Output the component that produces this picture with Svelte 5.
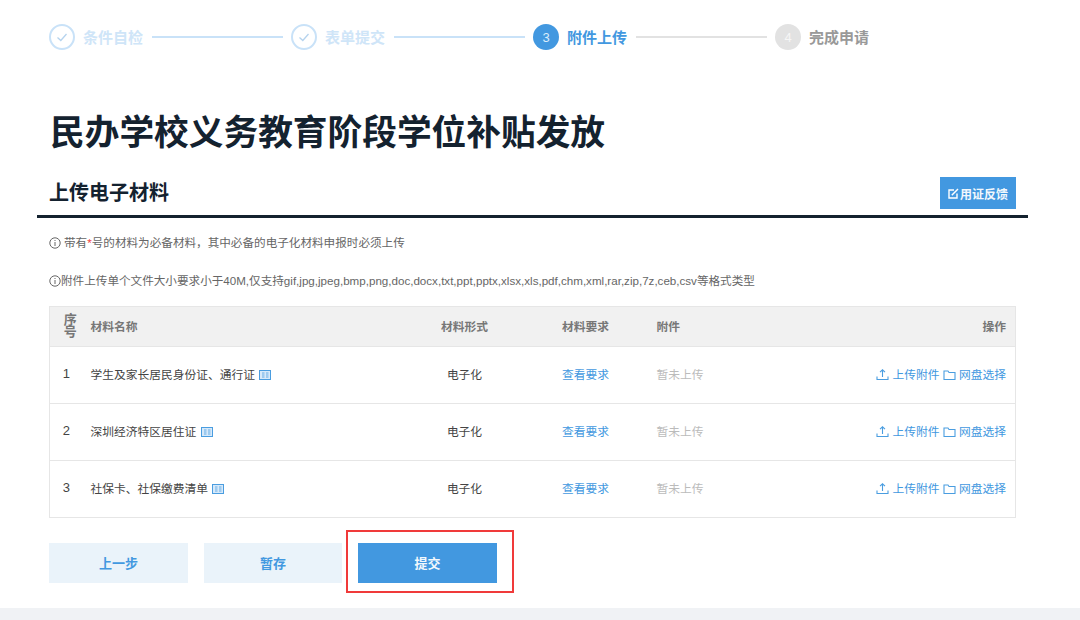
<script>
    const steps = [
        { label: '条件自检', state: 'done' },
        { label: '表单提交', state: 'done' },
        { label: '附件上传', no: 3, state: 'active' },
        { label: '完成申请', no: 4, state: 'todo' }
    ];

    const materials = [
        { no: 1, name: '学生及家长居民身份证、通行证' },
        { no: 2, name: '深圳经济特区居住证' },
        { no: 3, name: '社保卡、社保缴费清单' }
    ];
</script>

<div class="page">
    <div class="steps">
        {#each steps as step, i}
            <div class="step {step.state}">
                <span class="dot">
                    {#if step.state === 'done'}
                        <svg width="14" height="14" viewBox="0 0 14 14" fill="none"><path d="M2.5 7.5 L5.8 10.5 L11.5 4" stroke="currentColor" stroke-width="1.3" /></svg>
                    {:else}
                        {step.no}
                    {/if}
                </span>
                <span class="step-label">{step.label}</span>
            </div>
            {#if i < steps.length - 1}
                <span class="step-line {step.state === 'done' ? 'blue' : ''}"></span>
            {/if}
        {/each}
    </div>

    <h1>民办学校义务教育阶段学位补贴发放</h1>

    <div class="section-head">
        <h2>上传电子材料</h2>
        <button class="feedback">
            <svg width="11" height="11" viewBox="0 0 11 11" fill="none"><path d="M9 5.5 V10 H1 V2 H6" stroke="#fff" stroke-width="1.4" /><path d="M3.8 7.2 L10 1" stroke="#fff" stroke-width="1.5" /></svg>
            用证反馈
        </button>
    </div>

    <div class="notes">
        <p class="note-first">
            <svg class="info" width="12" height="12" viewBox="0 0 12 12" fill="none"><circle cx="6" cy="6" r="5.2" stroke="#666" /><path d="M6 5 V9 M6 3 V4" stroke="#666" /></svg>
            <span class="gap">带有<b class="req">*</b>号的材料为必备材料，其中必备的电子化材料申报时必须上传</span>
        </p>
        <p class="note-second">
            <svg class="info" width="12" height="12" viewBox="0 0 12 12" fill="none"><circle cx="6" cy="6" r="5.2" stroke="#666" /><path d="M6 5 V9 M6 3 V4" stroke="#666" /></svg>
            <span>附件上传单个文件大小要求小于40M,仅支持gif,jpg,jpeg,bmp,png,doc,docx,txt,ppt,pptx,xlsx,xls,pdf,chm,xml,rar,zip,7z,ceb,csv等格式类型</span>
        </p>
    </div>

    <table>
        <colgroup>
            <col class="c-no" />
            <col class="c-name" />
            <col class="c-form" />
            <col class="c-req" />
            <col class="c-file" />
            <col />
        </colgroup>
        <thead>
            <tr>
                <th class="no">序号</th>
                <th class="left">材料名称</th>
                <th>材料形式</th>
                <th class="req-cell">材料要求</th>
                <th class="left">附件</th>
                <th class="right">操作</th>
            </tr>
        </thead>
        <tbody>
            {#each materials as m}
                <tr>
                    <td class="num">{m.no}</td>
                    <td class="left name">
                        {m.name}
                        <svg class="tag" width="12" height="10" viewBox="0 0 12 10"><rect x="0.5" y="0.5" width="11" height="9" fill="#d6e9fa" stroke="#4a9de0" /><path d="M3 3 H5.5 M3 5 H5.5 M3 7 H5.5 M7 3 H9.5 M7 5 H9.5 M7 7 H9.5" stroke="#4a9de0" stroke-width="0.8" /></svg>
                    </td>
                    <td class="form">电子化</td>
                    <td class="req-cell"><span class="link">查看要求</span></td>
                    <td class="left muted">暂未上传</td>
                    <td class="right ops">
                        <span class="link op">
                            <svg width="13" height="13" viewBox="0 0 13 13" fill="none"><path d="M6.5 9 V2 M4 4.2 L6.5 1.8 L9 4.2 M1 8.5 V11.5 H12 V8.5" stroke="#4a9de0" stroke-width="1.1" /></svg>
                            上传附件
                        </span>
                        <span class="link op">
                            <svg width="13" height="12" viewBox="0 0 13 12" fill="none"><path d="M1 2 H5 L6 3.5 H12 V10.5 H1 Z" stroke="#4a9de0" stroke-width="1.1" /></svg>
                            网盘选择
                        </span>
                    </td>
                </tr>
            {/each}
        </tbody>
    </table>

    <div class="actions">
        <button class="btn light">上一步</button>
        <button class="btn light save">暂存</button>
        <div class="submit-wrap">
            <button class="btn primary">提交</button>
            <span class="highlight"></span>
        </div>
    </div>

    <div class="footer"></div>
</div>

<style>
    :global(body) {
        margin: 0;
        background: #fff;
    }

    .page {
        width: 1080px;
        height: 620px;
        overflow: hidden;
        font-family: "Liberation Sans", "Noto Sans CJK SC", sans-serif;
        color: #333;
    }

    .steps {
        display: flex;
        align-items: center;
        gap: 8px;
        height: 26px;
        padding: 24px 0 0 49px;
    }

    .step {
        display: flex;
        align-items: center;
        gap: 8px;
        font-size: 15px;
        font-weight: 700;
    }

    .step-label {
        margin-top: -2px;
    }

    .dot {
        width: 26px;
        height: 26px;
        box-sizing: border-box;
        border-radius: 50%;
        display: flex;
        align-items: center;
        justify-content: center;
        font-size: 13px;
        font-weight: 400;
    }

    .step.done .dot {
        border: 2px solid #c9e2f8;
        color: #b5d3ee;
    }

    .step.done .step-label {
        color: #cfe5f8;
    }

    .step.active .dot {
        background: #4298e0;
        color: #dcedfb;
    }

    .step.active .step-label {
        color: #4298e0;
    }

    .step.todo .dot {
        background: #e2e2e2;
        color: #f6f6f6;
    }

    .step.todo .step-label {
        color: #999;
    }

    .step-line {
        width: 131px;
        height: 2px;
        margin-left: 1px;
        background: #e2e2e2;
    }

    .step-line.blue {
        background: #c9e2f8;
    }

    h1 {
        margin: 0;
        padding: 60px 0 0 50px;
        height: 47px;
        font-size: 34.7px;
        line-height: 47px;
        font-weight: 700;
        color: #14222f;
    }

    .section-head {
        display: flex;
        align-items: center;
        justify-content: space-between;
        box-sizing: border-box;
        width: 991px;
        height: 42px;
        margin: 19px 0 0 37px;
        padding: 1px 12px 6px 12px;
        border-bottom: 3px solid #14222f;
    }

    h2 {
        margin: 0;
        font-size: 20px;
        line-height: 32px;
        font-weight: 700;
        color: #14222f;
    }

    .feedback {
        display: flex;
        align-items: center;
        justify-content: center;
        gap: 1px;
        width: 76px;
        height: 32px;
        padding: 0;
        border: none;
        background: #4298e0;
        color: #f2f8fd;
        font: 700 12px "Liberation Sans", "Noto Sans CJK SC", sans-serif;
    }

    .notes {
        padding: 17px 0 0 49px;
        font-size: 11.6px;
        line-height: 16px;
        color: #666;
    }

    .notes p {
        display: flex;
        align-items: center;
        margin: 0;
    }

    .note-second {
        margin-top: 22px !important;
    }

    .gap {
        margin-left: 3px;
    }

    .info {
        flex: none;
    }

    .req {
        color: #f04040;
        font-weight: 400;
    }

    table {
        width: 967px;
        margin: 17px 0 0 49px;
        border-collapse: collapse;
        table-layout: fixed;
        font-size: 11.75px;
        border: 1px solid #e6e6e6;
    }

    .c-no { width: 41px; }
    .c-name { width: 333px; }
    .c-form { width: 82px; }
    .c-req { width: 151px; }
    .c-file { width: 100px; }

    th {
        height: 37px;
        padding: 0 0 2px;
        background: #f1f1f1;
        color: #777;
        font-weight: 700;
        text-align: center;
    }

    th.no {
        padding: 0 9px 1px;
        line-height: 12px;
        font-size: 13px;
    }

    td {
        height: 53px;
        padding: 0 0 3px;
        text-align: center;
        border-top: 1px solid #e6e6e6;
        color: #444;
    }

    .left {
        text-align: left;
    }

    .right {
        text-align: right;
        padding-right: 9px;
    }

    .req-cell {
        padding-left: 9px;
    }

    .num {
        padding-right: 8px;
        font-size: 13px;
    }

    .name svg {
        vertical-align: -1px;
        margin-left: 1px;
    }

    .link {
        color: #4298e0;
    }

    .muted {
        color: #bbb;
    }

    .ops {
        white-space: nowrap;
    }

    .op svg {
        vertical-align: -2px;
    }

    .actions {
        display: flex;
        gap: 16px;
        padding: 25px 0 0 49px;
    }

    .btn {
        width: 139px;
        height: 40px;
        padding: 0 0 2px;
        border: none;
        font: 700 13px "Liberation Sans", "Noto Sans CJK SC", sans-serif;
    }

    .btn.save {
        width: 138px;
    }

    .btn.light {
        background: #eaf3fa;
        color: #4298e0;
    }

    .btn.primary {
        display: block;
        background: #4298e0;
        color: #f2f8fd;
    }

    .submit-wrap {
        position: relative;
    }

    .highlight {
        position: absolute;
        left: -12px;
        top: -13px;
        width: 168px;
        height: 63px;
        box-sizing: border-box;
        border: 2px solid #f03a3a;
    }

    .footer {
        height: 12px;
        margin-top: 25px;
        background: #f0f2f5;
    }
</style>
